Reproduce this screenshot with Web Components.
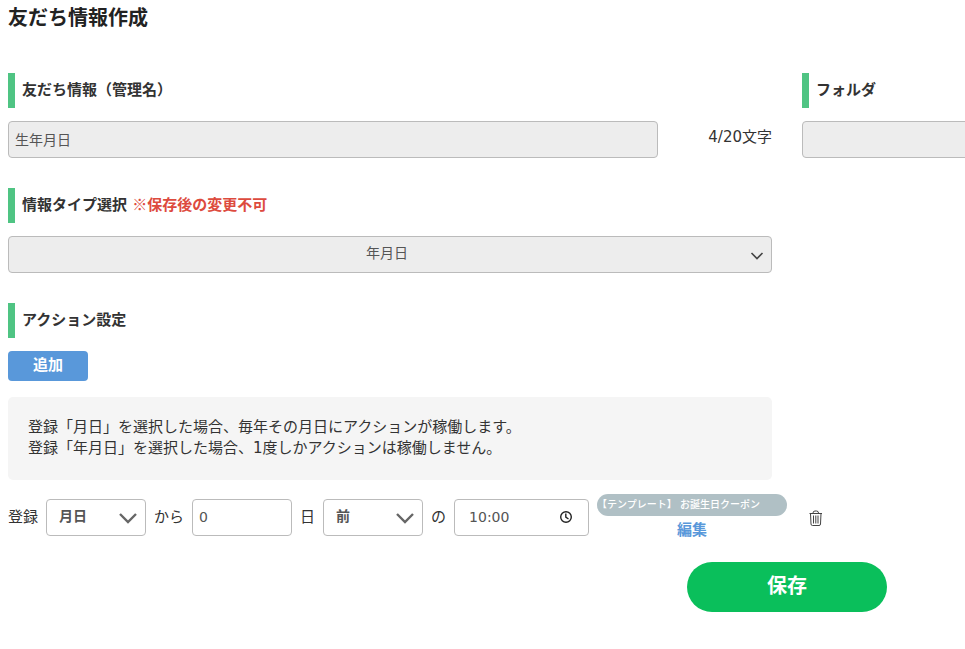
<!DOCTYPE html>
<html lang="ja">
<head>
<meta charset="utf-8">
<meta name="viewport" content="width=device-width, initial-scale=1">
<title>友だち情報作成</title>
<style>
  body {
    margin: 0;
    background: #fff;
    color: #333;
    font: 15px/21px "DejaVu Sans", "Noto Sans CJK JP", sans-serif;
    --green: #4fc483;
    --blue: #5998da;
    --border: #bbb;
    --disabled: #ededed;
  }
</style>
</head>
<body>
<friend-info-page>
  <span slot="title">友だち情報作成</span>
  <text-field slot="name" label="友だち情報（管理名）" value="生年月日" max="20"></text-field>
  <select-field slot="folder" label="フォルダ"></select-field>
  <select-field slot="type" label="情報タイプ選択" note="※保存後の変更不可" value="年月日"></select-field>
  <action-settings slot="actions">
    <span slot="heading">アクション設定</span>
    <span slot="add">追加</span>
    <info-note slot="note">登録「月日」を選択した場合、毎年その月日にアクションが稼働します。<br>登録「年月日」を選択した場合、1度しかアクションは稼働しません。</info-note>
    <action-row basis="月日" days="0" when="前" time="10:00">
      <template-tag>【テンプレート】 お誕生日クーポン</template-tag>
    </action-row>
  </action-settings>
  <save-button slot="save">保存</save-button>
</friend-info-page>

<script>
const baseStyle = `
  * { box-sizing: border-box; }
  :host { display: block; min-width: 0; }
  .heading {
    display: block;
    margin: 0 0 13px;
    padding: 7px;
    border-left: 7px solid var(--green);
    font-size: 15px;
    line-height: 21px;
    font-weight: 700;
    color: #333;
  }
  input, select {
    appearance: none;
    display: block;
    width: 100%;
    height: 37px;
    margin: 0;
    padding: 0 6px 2px;
    border: 1px solid var(--border);
    border-radius: 4px;
    background: #fff;
    color: #555;
    font: inherit;
    font-size: 14px;
    opacity: 1;
  }
  input:disabled, select:disabled { background: var(--disabled); }
  .select { position: relative; }
  .select svg {
    position: absolute;
    fill: none;
    stroke: #444;
    pointer-events: none;
  }
`;

function define(name, html, setup) {
  const template = document.createElement('template');
  template.innerHTML = html;
  customElements.define(name, class extends HTMLElement {
    constructor() {
      super();
      this.attachShadow({ mode: 'open' });
      this.shadowRoot.appendChild(template.content.cloneNode(true));
    }

    connectedCallback() {
      if (setup) setup(this, this.shadowRoot);
    }
  });
}

define('friend-info-page', `
  <style>
    ${baseStyle}
    :host { overflow-x: hidden; padding: 3px 0 36px 8px; }
    h1 {
      margin: 0 0 40px;
      font-size: 20px;
      line-height: 30px;
      font-weight: 700;
      color: #222;
    }
    /* the folder column runs on past the right edge */
    .columns {
      display: grid;
      grid-template-columns: minmax(0, 1fr) 363px;
      gap: 30px;
      margin-right: -200px;
    }
    .wide { grid-column: 1 / -1; }
    .save {
      display: flex;
      justify-content: flex-end;
      margin-top: 21px;
      padding-right: 78px;
    }
  </style>
  <main>
    <h1><slot name="title"></slot></h1>
    <div class="columns">
      <slot name="name"></slot>
      <slot name="folder"></slot>
      <slot name="type"></slot>
      <div class="wide"><slot name="actions"></slot></div>
    </div>
    <div class="save"><slot name="save"></slot></div>
  </main>
`);

define('text-field', `
  <style>
    ${baseStyle}
    .row { display: flex; align-items: flex-start; }
    input { flex: 1; min-width: 0; }
    .count {
      flex: 0 0 114px;
      padding-top: 6px;
      text-align: right;
    }
  </style>
  <label class="heading" for="field"></label>
  <div class="row">
    <input id="field" type="text" disabled>
    <span class="count"></span>
  </div>
`, (host, root) => {
  const value = host.getAttribute('value') || '';
  root.querySelector('label').textContent = host.getAttribute('label');
  root.querySelector('input').value = value;
  root.querySelector('.count').textContent = `${value.length}/${host.getAttribute('max')}文字`;
});

define('select-field', `
  <style>
    ${baseStyle}
    .note {
      color: #dd4b3e;
      font-family: "Noto Sans CJK JP", sans-serif;
      line-height: 15px;
    }
    select { padding-right: 12px; text-align-last: center; }
    .select svg { right: 8px; top: 14px; }
  </style>
  <label class="heading" for="field"><span class="label"></span> <span class="note"></span></label>
  <div class="select">
    <select id="field" disabled><option></option></select>
    <svg width="14" height="12" stroke-width="1.6"><path d="M1.5 3L7 8.500 12.500 3"/></svg>
  </div>
`, (host, root) => {
  root.querySelector('.label').textContent = host.getAttribute('label');
  root.querySelector('.note').textContent = host.getAttribute('note') || '';
  root.querySelector('option').textContent = host.getAttribute('value') || '';
});

define('action-settings', `
  <style>
    ${baseStyle}
    button {
      display: block;
      width: 80px;
      height: 30px;
      padding: 0 0 2px;
      border: 0;
      border-radius: 4px;
      background: var(--blue);
      color: #fff;
      font: inherit;
      font-weight: 700;
      cursor: pointer;
    }
    .note { margin: 16px 393px 14px 0; }
  </style>
  <section>
    <h2 class="heading"><slot name="heading"></slot></h2>
    <button type="button"><slot name="add"></slot></button>
    <div class="note"><slot name="note"></slot></div>
    <slot></slot>
  </section>
`);

define('info-note', `
  <style>
    ${baseStyle}
    :host {
      padding: 20px 20px 21px;
      border-radius: 5px;
      background: #f5f5f5;
    }
  </style>
  <slot></slot>
`);

define('action-row', `
  <style>
    ${baseStyle}
    :host { display: flex; align-items: center; gap: 8px; }
    label { white-space: nowrap; }
    .select, .days { flex: 0 0 100px; }
    .select select { padding-left: 12px; font-weight: 700; }
    .select svg { right: 8px; top: 12px; stroke: #666; }
    .time { position: relative; flex: 0 0 135px; }
    .time input { padding-left: 14px; }
    .time svg {
      position: absolute;
      right: 16px;
      top: 11px;
      fill: none;
      stroke: #222;
      pointer-events: none;
    }
    .action { flex: 0 0 190px; text-align: center; }
    a {
      display: block;
      padding-top: 4px;
      color: var(--blue);
      font-weight: 700;
      text-decoration: none;
    }
    .delete {
      margin-left: 14px;
      padding: 0;
      border: 0;
      background: none;
      cursor: pointer;
    }
    .delete svg { display: block; fill: none; stroke: #444; }
  </style>
  <label for="basis">登録</label>
  <div class="select">
    <select id="basis"><option></option></select>
    <svg width="20" height="16" stroke-width="2.4"><path d="M2 3l8 8 8-8"/></svg>
  </div>
  <label for="days">から</label>
  <input class="days" id="days" type="text" inputmode="numeric">
  <label for="when">日</label>
  <div class="select">
    <select id="when"><option></option></select>
    <svg width="20" height="16" stroke-width="2.4"><path d="M2 3l8 8 8-8"/></svg>
  </div>
  <label for="time">の</label>
  <div class="time">
    <input id="time" type="text">
    <svg width="14" height="14" stroke-width="1.4"><circle cx="7" cy="7" r="5.3"/><path d="M6.8 3.5V7.2L9.5 9"/></svg>
  </div>
  <div class="action">
    <slot></slot>
    <a href="#">編集</a>
  </div>
  <button class="delete" type="button" aria-label="削除">
    <svg width="14" height="16"><path d="M.5 3.5h12.5M4 3q0-2 2-2h1.5q2 0 2 2M1.5 3.5l.5 10.500q0 1.500 1.500 1.500h6.500q1.500 0 1.500-1.500l.5-10.500M4.500 5.500v8M6.800 5.500v8M9 5.500v8"/></svg>
  </button>
`, (host, root) => {
  root.querySelector('#basis option').textContent = host.getAttribute('basis');
  root.querySelector('#when option').textContent = host.getAttribute('when');
  root.querySelector('#days').value = host.getAttribute('days');
  root.querySelector('#time').value = host.getAttribute('time');
});

define('template-tag', `
  <style>
    ${baseStyle}
    :host {
      padding: 0 4px 1px 0;
      border-radius: 11px;
      background: #b0c0c5;
      color: #fff;
      font-size: 10px;
      font-weight: 500;
      text-align: left;
      white-space: nowrap;
    }
  </style>
  <slot></slot>
`);

define('save-button', `
  <style>
    ${baseStyle}
    button {
      display: block;
      width: 200px;
      height: 50px;
      padding: 0 0 2px;
      border: 0;
      border-radius: 25px;
      background: #0abf5b;
      color: #fff;
      font: inherit;
      font-size: 20px;
      font-weight: 700;
      cursor: pointer;
    }
  </style>
  <button type="button"><slot></slot></button>
`);
</script>
</body>
</html>
